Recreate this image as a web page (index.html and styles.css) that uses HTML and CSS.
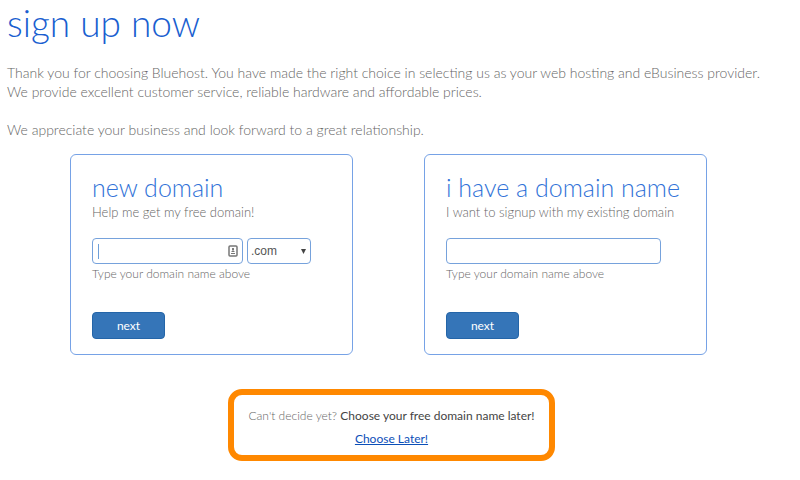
FILE: index.html
```html
<!DOCTYPE html>
<html lang="en">
<head>
    <meta charset="UTF-8">
    <meta name="viewport" content="width=device-width, initial-scale=1.0">
    <title>Sign up now</title>
    <link rel="stylesheet" href="styles.css">
</head>
<body>
    <header class="intro">
        <h1>sign up now</h1>
        <p>Thank you for choosing Bluehost. You have made the right choice in selecting us as your web hosting and eBusiness provider.<br>
        We provide excellent customer service, reliable hardware and affordable prices.</p>
        <p>We appreciate your business and look forward to a great relationship.</p>
    </header>

    <main>
        <div class="cards">
            <form class="card">
                <h2>new domain</h2>
                <p class="subtitle">Help me get my free domain!</p>
                <div class="fields">
                    <div class="domain-box">
                        <input type="text" id="newDomain" class="active">
                        <svg class="autofill" viewBox="0 0 10 12" aria-hidden="true">
                            <rect x="1" y="1" width="8" height="10" rx="1" fill="#fff" stroke="#777" stroke-width="1.5"/>
                            <circle cx="5" cy="4" r="1" fill="#555"/>
                            <path d="M5 4v3M3.500 6.500h3M3 8.500h4" stroke="#777" fill="none"/>
                        </svg>
                    </div>
                    <select aria-label="Domain extension">
                        <option>.com</option>
                        <option>.net</option>
                        <option>.org</option>
                    </select>
                </div>
                <label for="newDomain">Type your domain name above</label>
                <button type="button">next</button>
            </form>

            <form class="card">
                <h2>i have a domain name</h2>
                <p class="subtitle">I want to signup with my existing domain</p>
                <div class="fields existing">
                    <input type="text" id="ownDomain">
                </div>
                <label for="ownDomain">Type your domain name above</label>
                <button type="button">next</button>
            </form>
        </div>

        <div class="later">
            <p>Can't decide yet? <strong>Choose your free domain name later!</strong></p>
            <a href="#">Choose Later!</a>
        </div>
    </main>
</body>
</html>
```
FILE: styles.css
```css
* {
    box-sizing: border-box;
}
body {
    margin: 0;
    background-color: #fff;
    color: #666;
    font-family: Lato, "Open Sans", sans-serif;
    font-weight: 300;
    font-size: 14px;
    line-height: 19px;
}
h1, h2, p {
    margin: 0;
    font-weight: 300;
}
.intro {
    padding: 0 7px;
}
h1 {
    color: #1a5fd0;
    font-size: 37px;
    line-height: 46px;
    margin-bottom: 17px;
}
.intro p {
    margin-bottom: 19px;
}
main {
    padding-right: 17px;
}
.cards {
    display: grid;
    grid-template-columns: repeat(2, minmax(0, 1fr));
    gap: 71px;
    padding: 0 76px 0 70px;
    margin-top: -4px;
}
.card {
    display: flex;
    flex-direction: column;
    align-items: flex-start;
    padding: 17px 21px 15px;
    border: 1px solid #76a2e6;
    border-radius: 6px;
}
h2 {
    color: #3273d8;
    font-size: 25px;
    line-height: 30px;
    white-space: nowrap;
}
.subtitle {
    font-size: 13px;
    line-height: 20px;
    margin-bottom: 16px;
}
.fields {
    display: flex;
    gap: 4px;
    width: 219px;
}
.existing {
    width: 215px;
}
.domain-box {
    position: relative;
    flex: 1;
}
input, select {
    height: 26px;
    border: 1px solid #76a2dc;
    border-radius: 4px;
    background-color: #fff;
    color: #555;
    font-family: "Liberation Sans", Arial, sans-serif;
    font-size: 12px;
}
input {
    display: block;
    width: 100%;
    padding: 0 5px;
    outline: none;
}
.active {
    background: linear-gradient(#6f9fd8, #6f9fd8) 5px center / 1px 15px no-repeat #fff;
}
.active:focus {
    background: #fff;
}
.autofill {
    position: absolute;
    top: 7px;
    right: 5px;
    width: 10px;
    height: 12px;
}
select {
    width: 64px;
    padding: 0 3px;
    appearance: none;
    background-image: url("data:image/svg+xml,%3Csvg xmlns='http://www.w3.org/2000/svg' viewBox='0 0 6 6'%3E%3Cpath d='M0 0h6L3 6z' fill='%23444'/%3E%3C/svg%3E");
    background-repeat: no-repeat;
    background-position: right 4px center;
    background-size: 5px 5px;
}
label {
    font-size: 12px;
    line-height: 20px;
    margin-bottom: 28px;
}
button {
    width: 73px;
    height: 27px;
    padding: 0;
    border: 1px solid #2465a8;
    border-radius: 4px;
    background-color: #3575b8;
    color: #fff;
    font-family: inherit;
    font-size: 12px;
    cursor: pointer;
}
.later {
    width: 327px;
    margin: 34px auto 0;
    padding: 11px 8px 7px;
    border: 6px solid #ff8800;
    border-radius: 14px;
    text-align: center;
    font-size: 12px;
}
.later p {
    margin-bottom: 4px;
}
.later strong {
    color: #444;
    font-weight: 400;
}
.later a {
    color: #0b4fb8;
    font-weight: 400;
}
```
